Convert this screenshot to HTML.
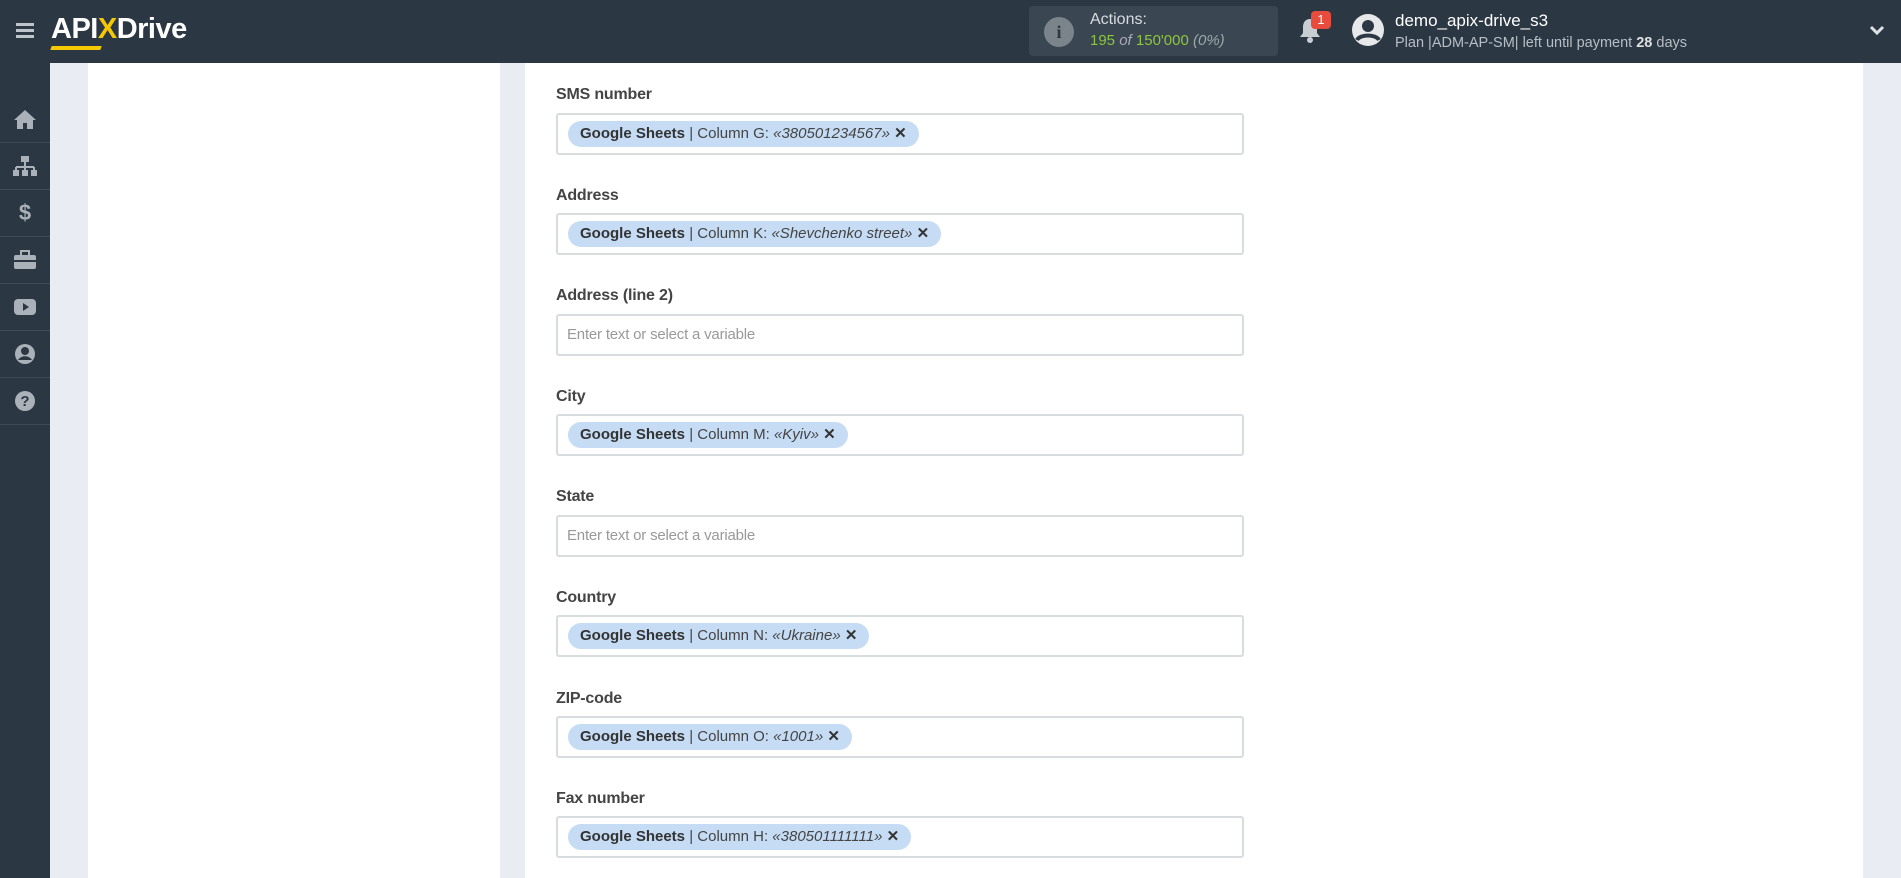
<!DOCTYPE html>
<html><head><meta charset="utf-8"><style>
*{box-sizing:border-box;margin:0;padding:0}
body{width:1901px;height:878px;overflow:hidden;background:#e9edf3;font-family:"Liberation Sans",sans-serif;position:relative}
.hdr{position:absolute;left:0;top:0;width:1901px;height:63px;background:#2c3744}
.side{position:absolute;left:0;top:63px;width:50px;height:815px;background:#2c3744}
.side .it{height:47px;border-bottom:1px solid #3e4a57;display:flex;align-items:center;justify-content:center}
.lcard{position:absolute;left:88px;top:63px;width:412px;height:815px;background:#fff}
.mcard{position:absolute;left:525px;top:63px;width:1338px;height:815px;background:#fff}
.lbl{position:absolute;left:556px;font-size:16px;color:#444;font-weight:bold;letter-spacing:-0.2px}
.inp{position:absolute;left:556px;width:688px;height:42px;border:2px solid #d9dcdf;border-radius:3px;background:#fff}
.tag{position:absolute;left:10px;top:6px;height:26px;background:#c5dcf4;border-radius:13px;padding:0 12px;font-size:15px;line-height:26px;color:#444;white-space:nowrap;letter-spacing:0}
.tag b{color:#333}
.ph{position:absolute;left:9px;top:10px;font-size:15px;color:#999;letter-spacing:-0.2px}
</style></head><body>
<div class="hdr">
 <div style="position:absolute;left:16px;top:23px;width:18px;height:3px;background:#bfc4ca;box-shadow:0 6px 0 #bfc4ca,0 12px 0 #bfc4ca"></div>
 <div style="position:absolute;left:51px;top:13px;font-size:29px;font-weight:bold;color:#fff;letter-spacing:-0.5px">API<span style="color:#f5c800">X</span>Drive</div>
 <div style="position:absolute;left:51px;top:46px;width:50px;height:4px;background:#f5c800;transform:skewX(-20deg)"></div>
 <div style="position:absolute;left:1029px;top:6px;width:249px;height:50px;background:#3a4651;border-radius:4px">
  <div style="position:absolute;left:15px;top:11px;width:30px;height:30px;border-radius:50%;background:#7b838b;color:#2c3744;font:bold 18px 'Liberation Serif',serif;text-align:center;line-height:30px">i</div>
  <div style="position:absolute;left:61px;top:5px;color:#d7dce0;font-size:16px">Actions:</div>
  <div style="position:absolute;left:61px;top:26px;color:#8cc63f;font-size:15px">195 <i style="color:#aab">of</i> 150'000 <i style="color:#9aa">(0%)</i></div>
 </div>
 <svg style="position:absolute;left:1298px;top:17px" width="24" height="28" viewBox="0 0 24 28"><path d="M12 2c-5 0-7 4-7 8v6l-3 4h20l-3-4v-6c0-4-2-8-7-8z" fill="#c9ced3"/><circle cx="12" cy="23" r="3" fill="#c9ced3"/></svg>
 <div style="position:absolute;left:1311px;top:11px;width:20px;height:18px;background:#e74c3c;border-radius:4px;color:#fff;font-size:13px;text-align:center;line-height:18px">1</div>
 <svg style="position:absolute;left:1351px;top:13px" width="34" height="34" viewBox="0 0 34 34"><circle cx="17" cy="17" r="16" fill="#e6e8ea"/><circle cx="17" cy="13" r="6" fill="#2c3744"/><path d="M6 27c3-6 19-6 22 0" stroke="#2c3744" stroke-width="4" fill="none"/></svg>
 <div style="position:absolute;left:1395px;top:11px;color:#fff;font-size:17px">demo_apix-drive_s3</div>
 <div style="position:absolute;left:1395px;top:35px;color:#b8bec5;font-size:14.5px">Plan |ADM-AP-SM| left until payment <b style="color:#e0e0e0">28</b> days</div>
 <svg style="position:absolute;left:1869px;top:25px" width="16" height="12" viewBox="0 0 16 12"><path d="M2 2l6 6 6-6" stroke="#e0e3e6" stroke-width="3" fill="none"/></svg>
</div>
<div class="side">
 <div style="height:33px;border-bottom:0"></div>
 <div class="it"><svg width="24" height="22" viewBox="0 0 24 22"><path d="M12 2L1 12h3v9h6v-6h4v6h6v-9h3z" fill="#aab1b8"/></svg></div>
 <div class="it"><svg width="26" height="22" viewBox="0 0 26 22"><rect x="9" y="1" width="8" height="6" fill="#aab1b8"/><path d="M13 7v5M4 12h18M4 12v3M13 12v3M22 12v3" stroke="#aab1b8" stroke-width="2"/><rect x="1" y="15" width="6" height="6" fill="#aab1b8"/><rect x="10" y="15" width="6" height="6" fill="#aab1b8"/><rect x="19" y="15" width="6" height="6" fill="#aab1b8"/></svg></div>
 <div class="it"><span style="color:#aab1b8;font-size:22px;font-weight:bold">$</span></div>
 <div class="it"><svg width="24" height="20" viewBox="0 0 24 20"><rect x="1" y="5" width="22" height="14" rx="2" fill="#aab1b8"/><rect x="8" y="1" width="8" height="5" fill="none" stroke="#aab1b8" stroke-width="2"/><rect x="1" y="10" width="22" height="2" fill="#2c3744"/></svg></div>
 <div class="it"><svg width="24" height="18" viewBox="0 0 24 18"><rect x="1" y="1" width="22" height="16" rx="4" fill="#aab1b8"/><path d="M10 5v8l6-4z" fill="#2c3744"/></svg></div>
 <div class="it"><svg width="22" height="22" viewBox="0 0 22 22"><circle cx="11" cy="11" r="10" fill="#aab1b8"/><circle cx="11" cy="8" r="4" fill="#2c3744"/><path d="M4 17c3-5 11-5 14 0" fill="#2c3744"/></svg></div>
 <div class="it"><svg width="22" height="22" viewBox="0 0 22 22"><circle cx="11" cy="11" r="10" fill="#aab1b8"/><text x="11" y="16" font-size="15" font-weight="bold" text-anchor="middle" fill="#2c3744" font-family="Liberation Sans">?</text></svg></div>
</div>
<div class="lcard"></div>
<div class="mcard"></div>

<div class="lbl" style="top:86px">SMS number</div>
<div class="inp" style="top:113px"><div class="tag"><b>Google Sheets</b> | Column G: <i>«380501234567»</i> <b>✕</b></div></div>
<div class="lbl" style="top:187px">Address</div>
<div class="inp" style="top:213px"><div class="tag"><b>Google Sheets</b> | Column K: <i>«Shevchenko street»</i> <b>✕</b></div></div>
<div class="lbl" style="top:287px">Address (line 2)</div>
<div class="inp" style="top:314px"><div class="ph">Enter text or select a variable</div></div>
<div class="lbl" style="top:388px">City</div>
<div class="inp" style="top:414px"><div class="tag"><b>Google Sheets</b> | Column M: <i>«Kyiv»</i> <b>✕</b></div></div>
<div class="lbl" style="top:488px">State</div>
<div class="inp" style="top:515px"><div class="ph">Enter text or select a variable</div></div>
<div class="lbl" style="top:589px">Country</div>
<div class="inp" style="top:615px"><div class="tag"><b>Google Sheets</b> | Column N: <i>«Ukraine»</i> <b>✕</b></div></div>
<div class="lbl" style="top:690px">ZIP-code</div>
<div class="inp" style="top:716px"><div class="tag"><b>Google Sheets</b> | Column O: <i>«1001»</i> <b>✕</b></div></div>
<div class="lbl" style="top:790px">Fax number</div>
<div class="inp" style="top:816px"><div class="tag"><b>Google Sheets</b> | Column H: <i>«380501111111»</i> <b>✕</b></div></div>
</body></html>
